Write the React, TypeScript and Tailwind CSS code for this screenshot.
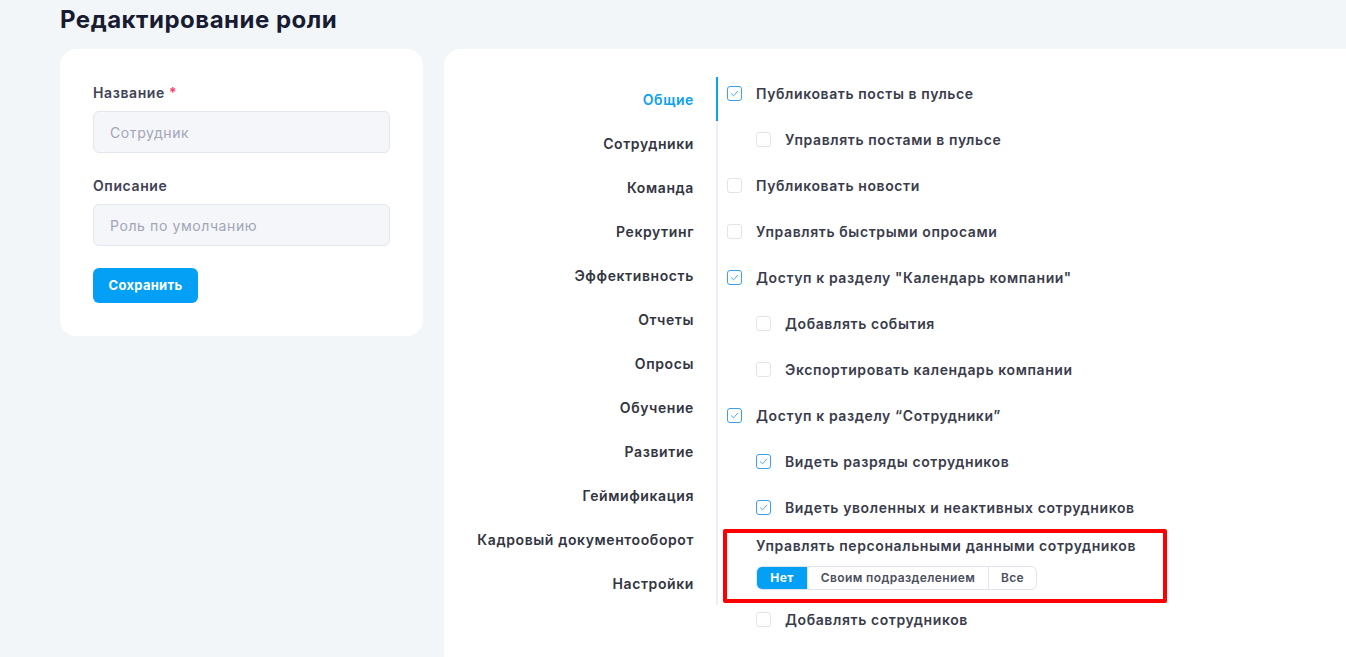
import { useState } from "react"

type Perm = { label: string; checked: boolean; sub?: boolean }

const sections = [
  "Общие",
  "Сотрудники",
  "Команда",
  "Рекрутинг",
  "Эффективность",
  "Отчеты",
  "Опросы",
  "Обучение",
  "Развитие",
  "Геймификация",
  "Кадровый документооборот",
  "Настройки",
]

const perms: Perm[] = [
  { label: "Публиковать посты в пульсе", checked: true },
  { label: "Управлять постами в пульсе", checked: false, sub: true },
  { label: "Публиковать новости", checked: false },
  { label: "Управлять быстрыми опросами", checked: false },
  { label: 'Доступ к разделу "Календарь компании"', checked: true },
  { label: "Добавлять события", checked: false, sub: true },
  { label: "Экспортировать календарь компании", checked: false, sub: true },
  { label: "Доступ к разделу “Сотрудники”", checked: true },
  { label: "Видеть разряды сотрудников", checked: true, sub: true },
  { label: "Видеть уволенных и неактивных сотрудников", checked: true, sub: true },
]

function Checkbox({ checked, onClick }: { checked: boolean; onClick: () => void }) {
  return (
    <button
      type="button"
      onClick={onClick}
      className={`w-[15px] h-[15px] shrink-0 rounded-[3px] border bg-white flex items-center justify-center ${
        checked ? "border-[#3d9fe8]" : "border-[#e1e4ea]"
      }`}
    >
      {checked && (
        <svg width="9" height="9" viewBox="0 0 10 10" fill="none">
          <path d="M1.5 5.3 4 7.6 8.6 2.4" stroke="#3d9fe8" strokeWidth="1" strokeLinecap="round" strokeLinejoin="round" />
        </svg>
      )}
    </button>
  )
}

export default function App() {
  const [active, setActive] = useState(0)
  const [items, setItems] = useState(perms)
  const [scope, setScope] = useState(0)
  const [addEmployees, setAddEmployees] = useState(false)

  function toggle(i: number) {
    setItems(items.map((p, idx) => (idx === i ? { ...p, checked: !p.checked } : p)))
  }

  return (
    <div
      className="min-h-screen bg-[#f3f6f9] pl-[60px] text-[#3a3c4b] tracking-[0.6px]"
      style={{ fontFamily: "Inter, 'Noto Sans', sans-serif" }}
    >
      <h1 className="pt-[4px] h-[49px] text-[24px] leading-8 font-bold text-[#181c32] tracking-[0.5px]">
        Редактирование роли
      </h1>

      <div className="flex gap-[21px] items-start">
        {/* role form */}
        <div className="w-[363px] shrink-0 bg-white rounded-2xl pt-[34px] px-[33px] pb-[33px]">
          <label className="block text-[14px] leading-5 font-semibold text-[#3f4254] mb-2">
            Название <span className="text-[#f1416c]">*</span>
          </label>
          <input
            placeholder="Сотрудник"
            className="w-full h-[42px] rounded-md border border-[#e4e6ef] bg-[#f5f6fa] px-4 text-[14px] tracking-[0.6px] placeholder:text-[#a1a5b7] outline-none"
          />
          <label className="block mt-[23px] text-[14px] leading-5 font-semibold text-[#3f4254] mb-2">Описание</label>
          <input
            placeholder="Роль по умолчанию"
            className="w-full h-[42px] rounded-md border border-[#e4e6ef] bg-[#f5f6fa] px-4 text-[14px] tracking-[0.6px] placeholder:text-[#a1a5b7] outline-none"
          />
          <button
            type="button"
            className="mt-[22px] h-[35px] w-[105px] rounded-md bg-[#03a0f5] text-white text-[13px] font-bold tracking-[0.3px]"
          >
            Сохранить
          </button>
        </div>

        {/* permissions */}
        <div className="flex-1 min-h-[660px] bg-white rounded-tl-2xl flex">
          <nav className="w-[274px] shrink-0 pt-[28px]">
            {sections.map((s, i) => (
              <button
                key={s}
                type="button"
                onClick={() => setActive(i)}
                className={`w-full h-[44px] flex items-center justify-end pr-[22px] border-r-2 text-[14px] font-semibold tracking-[0.6px] ${
                  i === active ? "border-[#0ba0f2] text-[#0ba0f2]" : "border-[#eceef4] text-[#33353f]"
                }`}
              >
                {s}
              </button>
            ))}
          </nav>

          <div className="pt-[21px] pl-[9px]">
            {items.map((p, i) => (
              <div key={p.label} className={`h-[46px] flex items-center gap-[14px] ${p.sub ? "pl-[29px]" : ""}`}>
                <Checkbox checked={p.checked} onClick={() => toggle(i)} />
                <span className="text-[14px] font-semibold text-[#3a3c4b]">{p.label}</span>
              </div>
            ))}

            <div className="relative pl-[29px] pt-[6px] pb-[6px]">
              <div className="absolute -top-[1px] -left-[4px] w-[444px] h-[74px] border-4 border-[#ff0000] rounded-[2px] pointer-events-none" />
              <div className="text-[14px] leading-5 font-semibold text-[#3a3c4b]">
                Управлять персональными данными сотрудников
              </div>
              <div className="mt-[10px] inline-flex h-[24px] rounded-md border border-[#e1e4ea] overflow-hidden text-[12px] font-semibold tracking-[0.4px]">
                {["Нет", "Своим подразделением", "Все"].map((o, i) => (
                  <button
                    key={o}
                    type="button"
                    onClick={() => setScope(i)}
                    className={`h-full flex items-center justify-center ${i > 0 ? "border-l border-[#e1e4ea]" : ""} ${
                      i === 0 ? "w-[50px]" : i === 1 ? "w-[181px]" : "w-[48px]"
                    } ${scope === i ? "bg-[#03a0f5] text-white font-bold" : "text-[#4b4e5c]"}`}
                  >
                    {o}
                  </button>
                ))}
              </div>
            </div>

            <div className="h-[46px] flex items-center gap-[14px] pl-[29px]">
              <Checkbox checked={addEmployees} onClick={() => setAddEmployees(!addEmployees)} />
              <span className="text-[14px] font-semibold text-[#3a3c4b]">Добавлять сотрудников</span>
            </div>
          </div>
        </div>
      </div>
    </div>
  )
}
